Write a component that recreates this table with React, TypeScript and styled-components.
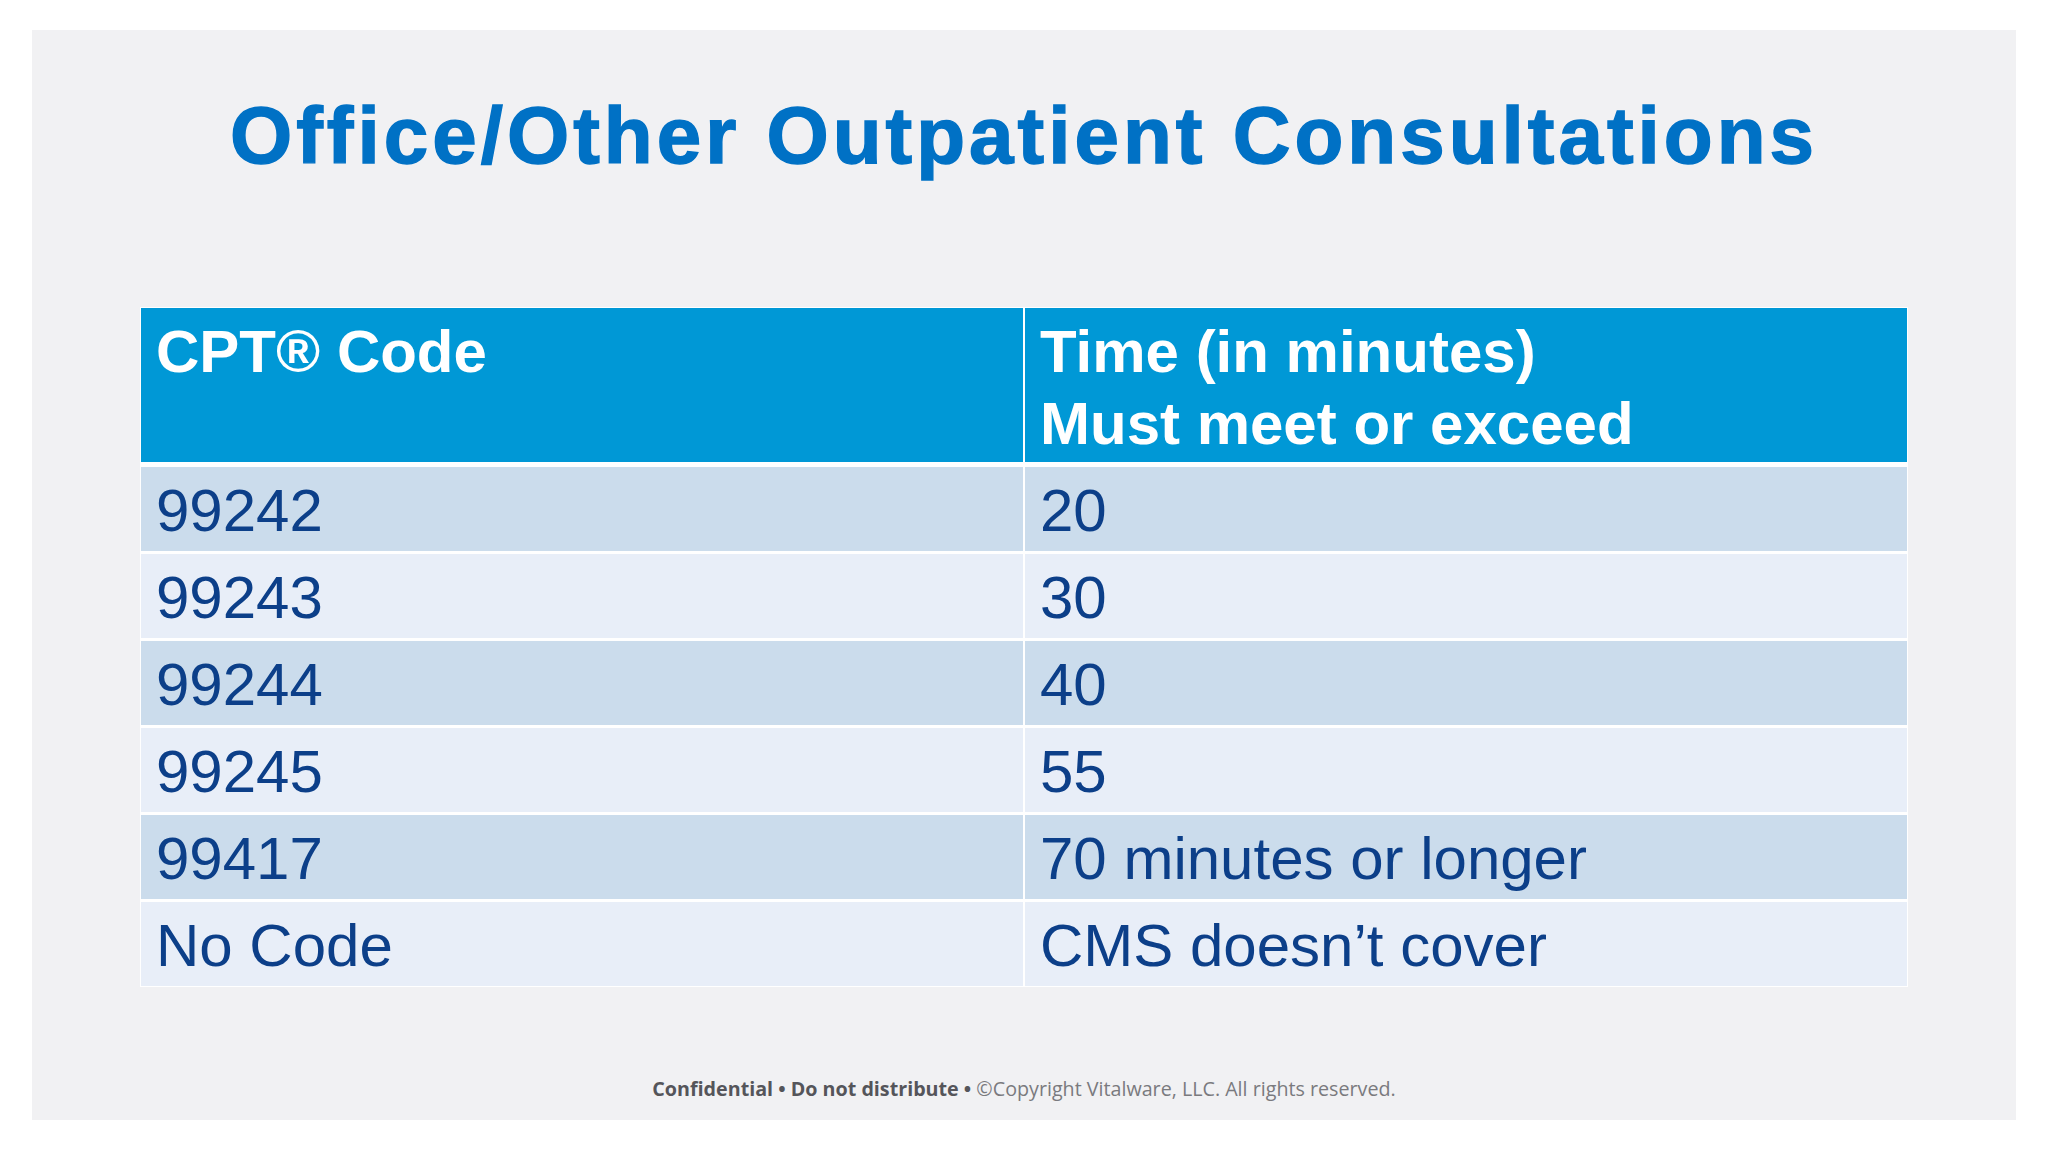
import * as React from 'react';
import styled, { createGlobalStyle } from 'styled-components';

const GlobalStyle = createGlobalStyle`
  html, body {
    margin: 0;
    padding: 0;
    background: #ffffff;
  }
  body {
    font-family: "Liberation Sans", Arial, sans-serif;
  }
`;

const Page = styled.div`
  width: 2048px;
  height: 1152px;
  padding: 30px 0 0 32px;
  box-sizing: border-box;
`;

const Slide = styled.section`
  width: 1984px;
  height: 1090px;
  background: #f1f1f3;
  display: flex;
  flex-direction: column;
  align-items: center;
  padding-top: 66px;
  box-sizing: border-box;
`;

const Title = styled.h1`
  margin: 0;
  font-family: "Liberation Sans", Arial, sans-serif;
  font-weight: 700;
  font-size: 80px;
  line-height: 80px;
  letter-spacing: 4px;
  color: #0071c5;
  -webkit-text-stroke: 1.4px #0071c5;
  white-space: nowrap;
`;

const Table = styled.div`
  margin-top: 131px;
  width: 1768px;
  padding: 1px;
  box-sizing: border-box;
  background: #ffffff;
  display: grid;
  grid-template-columns: 1fr 1fr;
  column-gap: 2px;
  row-gap: 3px;
`;

const HeadCell = styled.div`
  background: #0098d6;
  color: #ffffff;
  font-weight: 700;
  font-size: 60px;
  line-height: 72px;
  height: 154px;
  padding: 8px 0 0 15px;
  box-sizing: border-box;
  margin-bottom: 2px;
  white-space: nowrap;
`;

const Cell = styled.div<{ $shade: boolean }>`
  background: ${(p) => (p.$shade ? '#cbdcec' : '#e8eef8')};
  color: #0c3f89;
  font-size: 60px;
  height: 84px;
  display: flex;
  align-items: center;
  padding: 2px 0 0 15px;
  box-sizing: border-box;
  white-space: nowrap;
`;

const Footer = styled.footer`
  margin-top: auto;
  margin-bottom: 18px;
  font-family: "Open Sans", "Liberation Sans", sans-serif;
  font-size: 19.7px;
  color: #7a7a7e;
  white-space: nowrap;
`;

const Strong = styled.span`
  font-weight: 700;
  color: #55555a;
`;

const rows: [string, string][] = [
  ['99242', '20'],
  ['99243', '30'],
  ['99244', '40'],
  ['99245', '55'],
  ['99417', '70 minutes or longer'],
  ['No Code', 'CMS doesn\u2019t cover'],
];

export default function App() {
  return (
    <Page>
      <GlobalStyle />
      <Slide>
        <Title>Office/Other Outpatient Consultations</Title>
        <Table>
          <HeadCell>CPT® Code</HeadCell>
          <HeadCell>
            Time (in minutes)
            <br />
            Must meet or exceed
          </HeadCell>
          {rows.map(([code, time], i) => (
            <React.Fragment key={code}>
              <Cell $shade={i % 2 === 0}>{code}</Cell>
              <Cell $shade={i % 2 === 0}>{time}</Cell>
            </React.Fragment>
          ))}
        </Table>
        <Footer>
          <Strong>Confidential • Do not distribute •</Strong> ©Copyright Vitalware, LLC. All rights reserved.
        </Footer>
      </Slide>
    </Page>
  );
}
